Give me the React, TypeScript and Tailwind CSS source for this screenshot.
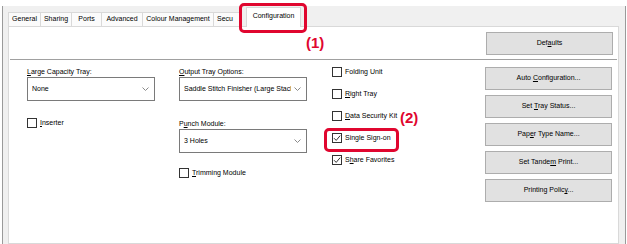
import React from "react";

const U = ({ children }: { children: React.ReactNode }) => <span className="underline underline-offset-1">{children}</span>;

function Tab({ label, w }: { label: string; w: string }) {
    return (
        <div className={`${w} h-[14px] border border-b-0 border-[#d9d9d9] bg-[#fbfbfb] -ml-px first:ml-0 flex items-center justify-center overflow-hidden whitespace-nowrap`}>
            {label}
        </div>
    );
}

function Checkbox({ checked, children }: { checked?: boolean; children: React.ReactNode }) {
    return (
        <div className="flex items-center h-[10px] gap-[3px] whitespace-nowrap">
            <div className="w-[10px] h-[10px] border border-[#333] bg-white flex items-center justify-center">
                {checked && (
                    <svg width="8" height="8" viewBox="0 0 8 8">
                        <path d="M1 4.2 L3.2 6.4 L7.2 1.6" fill="none" stroke="#333" strokeWidth="1" />
                    </svg>
                )}
            </div>
            <span>{children}</span>
        </div>
    );
}

function Select({ value }: { value: string }) {
    return (
        <div className="w-[128px] h-[24px] border border-[#7a7a7a] bg-white flex items-center pl-[4px] pr-[5px]">
            <span className="flex-1 overflow-hidden whitespace-nowrap">{value}</span>
            <svg width="7" height="4" viewBox="0 0 7 4" className="ml-[3px] shrink-0">
                <path d="M0.5 0.5 L3.5 3.5 L6.5 0.5" fill="none" stroke="#8a8a8a" strokeWidth="1" />
            </svg>
        </div>
    );
}

function Btn({ children }: { children: React.ReactNode }) {
    return (
        <div className="w-[127px] h-[23px] border border-[#adadad] bg-[#e1e1e1] flex items-center justify-center whitespace-nowrap">
            <span>{children}</span>
        </div>
    );
}

export default function App() {
    return (
        <div className="relative w-[627px] h-[244px] overflow-hidden bg-white text-[7px] text-black font-['Liberation_Sans',Arial,sans-serif]">
            <div className="mt-[6px] ml-[2px] w-[624px] h-[238px] bg-[#f0f0f0] border-l border-r border-[#9a9a9a] pl-[5px] flex flex-col">
                {/* tab strip */}
                <div className="h-[20px] flex items-end">
                    <Tab label="General" w="w-[33px]" />
                    <Tab label="Sharing" w="w-[32px]" />
                    <Tab label="Ports" w="w-[31px]" />
                    <Tab label="Advanced" w="w-[42px]" />
                    <Tab label="Colour Management" w="w-[72px]" />
                    <div className="w-[26px] h-[14px] -ml-px border border-b-0 border-r-0 border-[#d9d9d9] bg-[#fbfbfb] flex items-center pl-[3px] whitespace-nowrap">
                        Secu
                    </div>
                    <div className="ml-[7px] w-[55px] h-[20px] -mb-px relative z-10 border border-b-0 border-[#d9d9d9] bg-white flex items-center justify-center pb-[2px]">
                        Configuration
                    </div>
                </div>

                {/* panel */}
                <div className="w-[611px] flex-1 border border-[#d9d9d9] bg-white flex flex-col">
                    <div className="h-[32px] flex justify-end items-start pt-[5px] pr-[5px]">
                        <Btn>Def<U>a</U>ults</Btn>
                    </div>
                    <div className="h-px mx-px bg-[#a0a0a0]" />

                    <div className="flex pl-[18px] pt-[7px]">
                        <div className="w-[152px] flex flex-col">
                            <div className="h-[10px] leading-[10px]"><U>L</U>arge Capacity Tray:</div>
                            <Select value="None" />
                            <div className="mt-[17px]">
                                <Checkbox><U>I</U>nserter</Checkbox>
                            </div>
                        </div>

                        <div className="w-[152px] flex flex-col">
                            <div className="h-[10px] leading-[10px]"><U>O</U>utput Tray Options:</div>
                            <Select value="Saddle Stitch Finisher (Large Stacl" />
                            <div className="mt-[18px] h-[10px] leading-[10px]">P<U>u</U>nch Module:</div>
                            <Select value="3 Holes" />
                            <div className="mt-[15px]">
                                <Checkbox><U>T</U>rimming Module</Checkbox>
                            </div>
                        </div>

                        <div className="w-[154px] flex flex-col gap-[12px] pl-[1px]">
                            <Checkbox>Foldin<U>g</U> Unit</Checkbox>
                            <Checkbox><U>R</U>ight Tray</Checkbox>
                            <Checkbox><U>D</U>ata Security Kit</Checkbox>
                            <Checkbox checked>Single Sign-on</Checkbox>
                            <Checkbox checked>S<U>h</U>are Favorites</Checkbox>
                        </div>

                        <div className="flex flex-col gap-[5px]">
                            <Btn>Auto <U>C</U>onfiguration...</Btn>
                            <Btn>Set <U>T</U>ray Status...</Btn>
                            <Btn>Pap<U>e</U>r Type Name...</Btn>
                            <Btn>Set Tande<U>m</U> Print...</Btn>
                            <Btn>Printing Polic<U>y</U>...</Btn>
                        </div>
                    </div>
                </div>
            </div>

            {/* annotations */}
            <div className="absolute left-[239px] top-[3px] w-[68px] h-[30px] border-[3px] border-[#e0062f] rounded-[5px] z-20" />
            <div className="absolute left-[306px] top-[34px] text-[15px] font-bold text-[#e0062f] leading-[18px]">(1)</div>
            <div className="absolute left-[324px] top-[128px] w-[75px] h-[24px] border-[3px] border-[#e0062f] rounded-[5px] z-20" />
            <div className="absolute left-[400px] top-[109px] text-[15px] font-bold text-[#e0062f] leading-[18px]">(2)</div>
        </div>
    );
}
